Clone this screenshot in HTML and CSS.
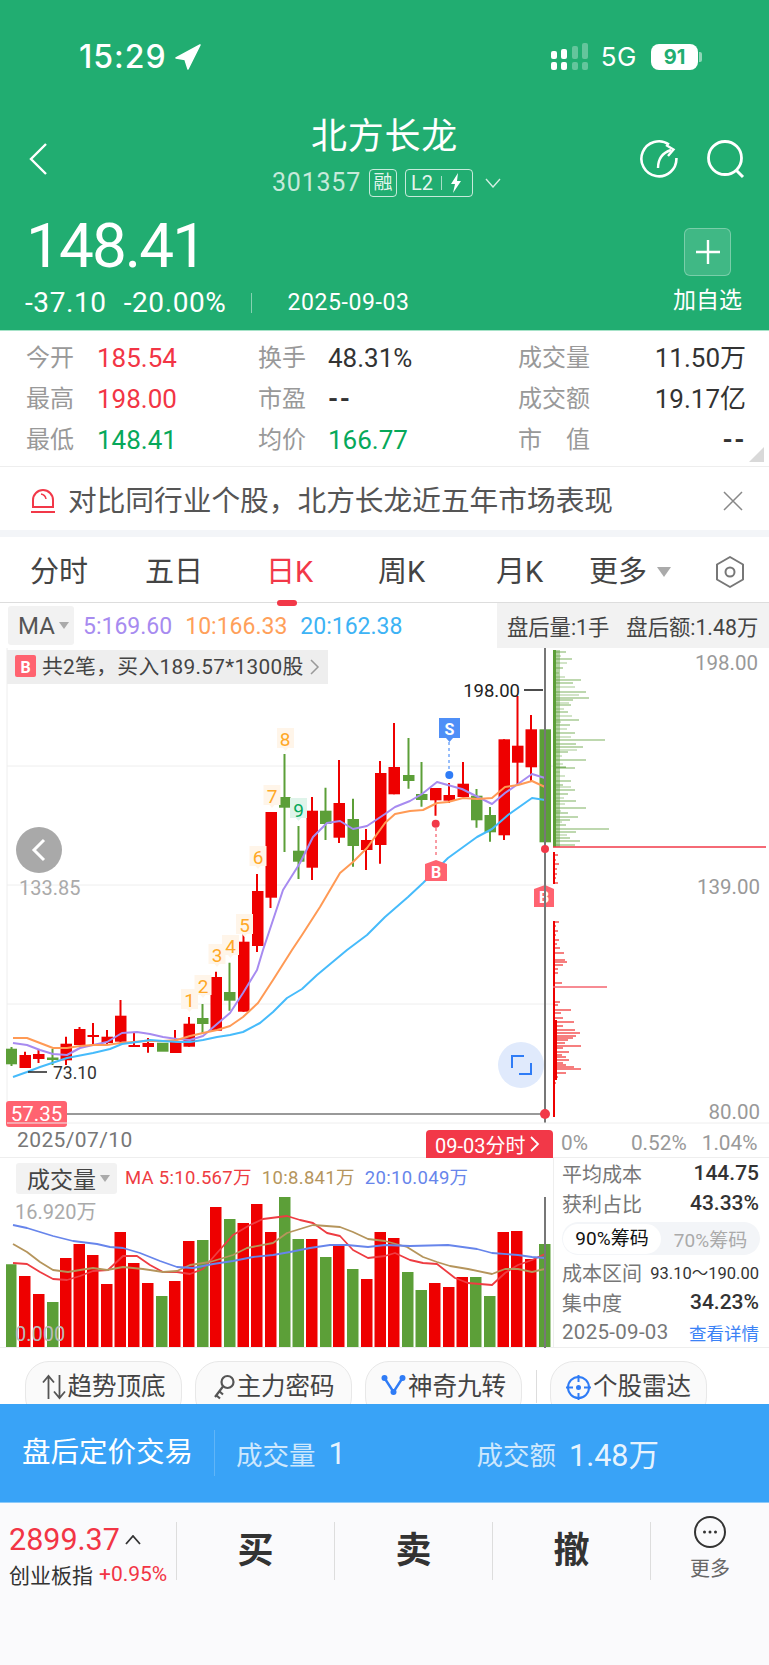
FILE: index.html
```html
<!DOCTYPE html>
<html lang="zh">
<head>
<meta charset="utf-8">
<title>北方长龙</title>
<link rel="stylesheet" href="styles.css">
</head>
<body>
<div class="page">
  <header class="header">
    <div class="status">
      <div class="status-left">
        <span class="time">15:29</span>
        <svg class="nav-arrow" width="26" height="26" viewBox="0 0 26 26"><path d="M25 1 L1 14 L10 15.500 L13 25 Z" fill="#fff" stroke="#fff" stroke-width="1.5" stroke-linejoin="round"/></svg>
      </div>
      <div class="status-right">
        <svg width="38" height="28" viewBox="0 0 38 28"><g fill="#fff"><rect x="0" y="8" width="6" height="8" rx="2"/><rect x="0" y="19" width="6" height="8" rx="2"/><rect x="10" y="6" width="6" height="10" rx="2"/><rect x="10" y="19" width="6" height="8" rx="2"/></g><g fill="#fff" fill-opacity=".3"><rect x="21" y="3" width="6" height="13" rx="2"/><rect x="21" y="19" width="6" height="8" rx="2"/><rect x="31" y="0" width="6" height="16" rx="2"/><rect x="31" y="19" width="6" height="8" rx="2"/></g></svg>
        <span class="net">5G</span>
        <span class="battery"><span class="battery-fill">91</span><span class="battery-tip"></span></span>
      </div>
    </div>
    <div class="title-row">
      <svg class="back" width="20" height="32" viewBox="0 0 20 32"><path d="M18 1 L3 16 L18 31" fill="none" stroke="#fff" stroke-width="2.4"/></svg>
      <div class="title-center">
        <div class="stock-name">北方长龙</div>
        <div class="stock-sub">
          <span class="stock-code">301357</span>
          <span class="badge-rong">融</span>
          <span class="badge-l2">L2<i class="l2-sep"></i><svg width="12" height="20" viewBox="0 0 12 20"><path d="M8 0 L1 11 H5 L3 20 L11 8 H7 Z" fill="#fff"/></svg></span>
          <svg class="sub-chev" width="16" height="10" viewBox="0 0 16 10"><path d="M1 1 L8 9 L15 1" fill="none" stroke="#fff" stroke-opacity=".8" stroke-width="1.4"/></svg>
        </div>
      </div>
      <div class="title-icons">
        <svg width="40" height="40" viewBox="0 0 40 40"><path d="M30 5.5 A17.5 17.5 0 1 0 37.4 19" fill="none" stroke="#fff" stroke-width="2.6"/><path d="M19 29 C19 20 23 14 32 11" fill="none" stroke="#fff" stroke-width="2.4"/><path d="M27 6 L34.500 10.500 L29 17" fill="none" stroke="#fff" stroke-width="2.4"/></svg>
        <svg width="40" height="40" viewBox="0 0 40 40"><circle cx="19" cy="19" r="16.500" fill="none" stroke="#fff" stroke-width="2.8"/><path d="M30 31 L37 38" stroke="#fff" stroke-width="3"/></svg>
      </div>
    </div>
    <div class="price-row">
      <div class="price-left">
        <div class="price">148.41</div>
        <div class="change-row">
          <span class="chg">-37.10</span>
          <span class="chg chg-pct">-20.00%</span>
          <i class="chg-sep"></i>
          <span class="chg-date">2025-09-03</span>
        </div>
      </div>
      <div class="fav">
        <span class="fav-btn">
          <svg width="26" height="26" viewBox="0 0 26 26"><path d="M13 1 V25 M1 13 H25" stroke="#fff" stroke-width="2.400"/></svg>
        </span>
        <span class="fav-text">加自选</span>
      </div>
    </div>
  </header>

  <section class="stats">
    <span class="k">今开</span><span class="v red">185.54</span><span class="k">换手</span><span class="v">48.31%</span><span class="k">成交量</span><span class="v right">11.50万</span>
    <span class="k">最高</span><span class="v red">198.00</span><span class="k">市盈</span><span class="v dash">--</span><span class="k">成交额</span><span class="v right">19.17亿</span>
    <span class="k">最低</span><span class="v green">148.41</span><span class="k">均价</span><span class="v green">166.77</span><span class="k">市　值</span><span class="v right dash">--</span>
    <i class="corner"></i>
  </section>

  <section class="notice">
    <svg width="26" height="26" viewBox="0 0 26 26"><path d="M3 19 V12 A10 10 0 0 1 23 12 V19 Z" fill="none" stroke="#F23848" stroke-width="2"/><path d="M1 24 H25" stroke="#F23848" stroke-width="2"/><path d="M11 6 A6 6 0 0 1 16 11" fill="none" stroke="#F23848" stroke-width="1.500"/></svg>
    <span class="notice-text">对比同行业个股，北方长龙近五年市场表现</span>
    <svg class="notice-x" width="20" height="20" viewBox="0 0 20 20"><path d="M1 1 L19 19 M19 1 L1 19" stroke="#888" stroke-width="1.500"/></svg>
  </section>

  <nav class="tabs">
    <span class="tab">分时</span>
    <span class="tab">五日</span>
    <span class="tab active">日K</span>
    <span class="tab">周K</span>
    <span class="tab">月K</span>
    <span class="tab tab-more">更多<i class="tri tri-lg"></i></span>
    <svg width="32" height="34" viewBox="0 0 32 34"><path d="M16 2 L29 9.500 V24.500 L16 32 L3 24.500 V9.500 Z" fill="none" stroke="#777" stroke-width="2" stroke-linejoin="round"/><circle cx="16" cy="17" r="4.500" fill="none" stroke="#777" stroke-width="2"/></svg>
  </nav>

  <div class="ma-row">
    <span class="ma-box">MA<i class="tri"></i></span>
    <span class="ma-val c-purple">5:169.60</span>
    <span class="ma-val c-orange">10:166.33</span>
    <span class="ma-val c-blue">20:162.38</span>
    <span class="after-box"><span>盘后量:1手</span><span>盘后额:1.48万</span></span>
  </div>

  <svg class="chart" viewBox="0 648 769 510" width="769" height="510">
    <g class="grid-lines">
      <path d="M7 648 V1123 M7 766 H553 M7 885 H553 M7 1004 H553"/>
    </g>
    <rect x="7" y="650" width="321" height="34" fill="#eee"/>
    <rect x="15" y="655" width="21" height="22" rx="2" fill="#FF6370"/>
    <text class="t-b" x="25.500" y="673" text-anchor="middle">B</text>
    <text class="t-tag" x="42" y="674">共2笔，买入189.57*1300股</text>
    <path d="M311 660 L318 667 L311 674" fill="none" stroke="#999" stroke-width="1.500"/>

    <path class="g-wick" d="M11.500 1047V1066M52.500 1049V1065M202.500 1004V1033M229.500 962.700V1010.700M284.500 754V852M298.500 826V879M325.500 787.700V840M353 798.700V866.700M408.500 738V788.700M421.500 762V806.700M476.500 789V827.700M490 807V841.700M545 692.700V842"/>
    <path class="r-wick" d="M25 1051.700V1068M38.500 1049V1063M66 1036.700V1065M79.500 1027V1045M93 1023V1045M107 1030V1045M120.500 1000V1045M134 1033V1047M148 1038V1052.700M175 1030V1053M189 1017V1046.700M216 971.700V1030.700M243.500 930V1011.700M257 874V952M270.500 812V908M312 797V880M339 760V843M366 829V870M380 761V863.700M394 723V794.300M435.500 788V815.700M449 783V803M463 762V797M504 739.300V840M517.500 696V785M531 715V781.700"/>
    <g fill="#5C9F38">
      <rect x="6" y="1048.700" width="11" height="15.600"/><rect x="47" y="1057.500" width="11.500" height="2.500"/><rect x="157" y="1042.700" width="11.500" height="9"/><rect x="197" y="1018" width="11.500" height="6"/><rect x="224" y="992" width="11.500" height="8.700"/><rect x="279" y="797" width="11.500" height="10.700"/><rect x="293" y="850.700" width="11.500" height="11"/><rect x="320" y="810.700" width="11.500" height="13.300"/><rect x="347.500" y="819" width="11.500" height="27"/><rect x="403" y="775" width="11.500" height="6"/><rect x="416" y="794" width="11.500" height="6"/><rect x="471" y="795.700" width="11.500" height="24.600"/><rect x="484.500" y="815" width="11.500" height="17.300"/><rect x="539.500" y="729.300" width="11.500" height="113"/>
    </g>
    <g fill="#EE0000">
      <rect x="19.500" y="1055" width="11.500" height="13"/><rect x="33" y="1054" width="11.500" height="5"/><rect x="60.500" y="1043.700" width="11.500" height="16.600"/><rect x="74" y="1029" width="11.500" height="16"/><rect x="87.500" y="1035" width="11.500" height="2"/><rect x="101.500" y="1036.700" width="11.500" height="6.300"/><rect x="115" y="1015.700" width="11.500" height="26"/><rect x="128.500" y="1045" width="11.500" height="2"/><rect x="142.500" y="1043" width="11.500" height="4"/><rect x="170" y="1041.700" width="11.500" height="11.300"/><rect x="183.500" y="1023.700" width="11.500" height="23"/><rect x="210.500" y="977" width="11.500" height="53.700"/><rect x="238" y="941.700" width="11.500" height="70"/><rect x="252" y="891" width="11.500" height="55"/><rect x="265.500" y="812" width="11.500" height="85.700"/><rect x="306.500" y="810.700" width="11.500" height="57"/><rect x="333.500" y="803" width="11.500" height="34.700"/><rect x="361" y="840" width="11.500" height="10"/><rect x="375" y="773" width="11.500" height="72"/><rect x="388.500" y="767" width="11.500" height="27.300"/><rect x="430" y="788" width="11.500" height="12.300"/><rect x="443.500" y="795" width="11.500" height="5.700"/><rect x="457.500" y="783.700" width="11.500" height="13.300"/><rect x="498.500" y="739.300" width="11.500" height="96"/><rect x="512" y="745.700" width="11.500" height="17"/><rect x="525.500" y="729.300" width="11.500" height="38"/>
    </g>

    <polyline class="ln" stroke="#A78BF0" points="13,1043 27,1045 40,1050 53,1054 67,1055 80,1048 93,1045 107,1042 122,1033 137,1032 150,1034 163,1037 177,1039 190,1040 203,1036 217,1024 230,1013 243,993 257,970 263,950 283,890 300,863 313,837 327,823 340,821 353,829 367,826 385,814 395,807 410,801 422,794 437,782 462,789 492,804 505,793 518,784 532,774 545,778"/>
    <polyline class="ln" stroke="#FF9A55" points="13,1038 27,1038 40,1043 53,1048 67,1048 80,1046 93,1045 107,1045 120,1043 133,1042 147,1041 163,1041 177,1040 190,1036 203,1033 217,1030 230,1026 243,1017 258,1003 273,980 292,950 302,935 320,907 340,873 353,862 367,848 385,823 395,814 410,811 423,810 437,803 448,802 463,798 477,799 492,798 505,787 518,785 532,781 545,787"/>
    <polyline class="ln" stroke="#46BBFB" points="13,1077 27,1072 40,1067 67,1058 93,1053 110,1049 122,1044 137,1042 150,1040 163,1041 177,1042 190,1042 203,1040 217,1037 230,1035 243,1032 260,1023 273,1012 287,998 302,989 317,975 347,950 367,935 385,917 408,897 423,883 448,858 477,837 492,829 508,815 532,798 545,800"/>

    <g class="tag-o"><path d="M277 728h17v20h-6l-2.500 3l-2.500-3h-6z"/><path d="M263.500 785h17v20h-6l-2.500 3l-2.500-3h-6z"/><path d="M249.500 846h17v20h-6l-2.500 3l-2.500-3h-6z"/><path d="M236 914h17v20h-6l-2.500 3l-2.500-3h-6z"/><path d="M222 935h17v20h-6l-2.500 3l-2.500-3h-6z"/><path d="M208.500 944h17v20h-6l-2.500 3l-2.500-3h-6z"/><path d="M194.500 975h17v20h-6l-2.500 3l-2.500-3h-6z"/><path d="M181 989h17v20h-6l-2.500 3l-2.500-3h-6z"/></g>
    <path d="M290 798h17v20h-6l-2.500 3l-2.500-3h-6z" fill="#DFF4EA"/>
    <g class="t-num">
      <text x="285" y="746">8</text><text x="272" y="803">7</text><text x="258" y="864">6</text><text x="244.500" y="932">5</text><text x="230.500" y="953">4</text><text x="217" y="962">3</text><text x="203" y="993">2</text><text x="189.500" y="1007">1</text>
    </g>
    <text class="t-num9" x="298.500" y="817">9</text>

    <path class="dash-b" d="M449 742V770"/>
    <path d="M439 718h21v20h-7l-3.500 4l-3.500-4h-7z" fill="#4F8FF7"/>
    <text class="t-b" x="449.500" y="735" text-anchor="middle">S</text>
    <circle cx="449.300" cy="775" r="4" fill="#2F7CF6"/>

    <path class="dash-r" d="M436 828V858"/>
    <circle cx="435.700" cy="823.700" r="4" fill="#F23848"/>
    <path d="M425 864l11-4l11 4v17h-22z" fill="#FF6370"/>
    <text class="t-b" x="436" y="878" text-anchor="middle">B</text>

    <path class="dash-r" d="M545 854V886"/>
    <path d="M534 889l11-4l9 4v18h-20z" fill="#FF6370"/>
    <text class="t-b" x="544" y="903" text-anchor="middle">B</text>

    <path d="M524 690H543" stroke="#111" stroke-width="1.500"/>
    <text class="t-black" x="520" y="697" text-anchor="end">198.00</text>
    <path d="M28 1072H47" stroke="#222" stroke-width="1.500"/>
    <text class="t-black2" x="53" y="1079">73.10</text>
    <text class="t-gray" x="19" y="895">133.85</text>
    <text class="t-gray2" x="758" y="670" text-anchor="end">198.00</text>
    <text class="t-gray2" x="760" y="894" text-anchor="end">139.00</text>
    <text class="t-gray2" x="760" y="1119" text-anchor="end">80.00</text>

    <path d="M7 1114H545" stroke="#777" stroke-width="1.500"/>
    <path d="M545 648V1123" stroke="#777" stroke-width="2"/>
    <rect x="6" y="1101" width="61" height="26" rx="3" fill="#FF6370"/>
    <text class="t-white" x="36.500" y="1121" text-anchor="middle">57.35</text>
    <circle cx="545" cy="849" r="4" fill="#F23848"/>
    <circle cx="545" cy="1114" r="5" fill="#F23848"/>

    <circle cx="39" cy="850" r="23" fill="#A9A9A9"/>
    <path d="M44 840 L34 850 L44 860" fill="none" stroke="#fff" stroke-width="3"/>
    <circle cx="521" cy="1065" r="23" fill="#E0EAFC"/>
    <path d="M512 1068V1056H524 M531 1063V1074H519" fill="none" stroke="#2F7CF6" stroke-width="2"/>

    <rect x="553" y="650" width="3" height="197" fill="#5C9F38"/>
    <rect x="556" y="650" width="4" height="197" fill="#5C9F38" fill-opacity=".45"/>
    <path class="prof-g" d="M553 652h13M553 659h19M553 668h10M553 680h28M553 683h20M553 692h33M553 698h36M553 700h20M553 705h18M553 712h15M553 720h26M553 725h17M553 733h22M553 740h52M553 744h23M553 747h30M553 752h15M553 760h33M553 767h13M553 768h22M553 781h18M553 785h10M553 790h22M553 794h15M553 801h23M553 808h33M553 813h15M553 817h25M553 820h17M553 825h13M553 829h56M553 832h23M553 838h17M553 841h27M553 845h22"/>
    <path class="prof-g2" d="M553 656h8M553 663h14M553 673h6M553 677h12M553 687h22M553 695h26M553 703h16M553 709h11M553 716h19M553 722h8M553 729h14M553 737h18M553 750h24M553 756h9M553 764h10M553 772h7M553 776h12M553 787h18M553 798h11M553 804h12M553 811h8M553 822h9M553 835h14"/>
    <path d="M553 847H766" stroke="#F23848" stroke-width="1.500"/>
    <rect x="553" y="852" width="2" height="32" fill="#EE0000"/>
    <rect x="553" y="921" width="2" height="196" fill="#EE0000"/>
    <rect x="555" y="1020" width="2" height="60" fill="#EE0000"/>
    <path class="prof-r" d="M553 855h5M553 860h3M553 864h6M553 869h4M553 874h4M553 878h3M553 883h5M553 922h6M553 926h3M553 931h5M553 935h3M553 940h6M553 944h4M553 948h7M553 953h11M553 960h12M553 962h14M553 965h10M553 969h5M553 973h5M553 983h9M553 1002h7M553 1005h5M553 1010h18M553 1013h8M553 1018h10M553 1022h21M553 1026h10M553 1030h22M553 1033h27M553 1036h23M553 1038h20M553 1040h15M553 1043h12M553 1046h28M553 1048h10M553 1052h16M553 1055h9M553 1057h13M553 1060h16M553 1063h10M553 1065h13M553 1067h21M553 1069h28M553 1073h13M553 1077h5M553 1083h3"/>
    <path d="M553 987h54" stroke="#F4646F" stroke-width="1.500"/>
    <path d="M7 1123H769" stroke="#eee" stroke-width="1"/>
  </svg>

  <div class="date-row">
    <span class="date-left">2025/07/10</span>
    <span class="date-badge">09-03分时<svg width="10" height="16" viewBox="0 0 10 16"><path d="M1 1 L8 8 L1 15" fill="none" stroke="#fff" stroke-width="1.800"/></svg></span>
    <span class="pct-scale"><span>0%</span><span class="pct-mid">0.52%</span><span class="pct-last">1.04%</span></span>
  </div>

  <section class="lower">
    <div class="vol">
      <div class="vol-head">
        <span class="vol-box">成交量<i class="tri"></i></span>
        <span class="vma c-red">MA 5:10.567万</span>
        <span class="vma c-brown">10:8.841万</span>
        <span class="vma c-vblue">20:10.049万</span>
      </div>
      <svg class="vol-chart" viewBox="0 1197 553 151" width="553" height="151">
        <path class="vbar-g" d="M6 1264.300h10.500V1347H6zM47 1302h11.500V1347H47zM156 1296h11.500V1347H156zM197 1240h11.500V1347H197zM224 1219h11.500V1347H224zM279 1197h11.500V1347H279zM292.500 1239h11.500V1347H292.500zM320 1257h11.500V1347H320zM347 1269h11.500V1347H347zM402 1272h11.500V1347H402zM415.500 1290h11.500V1347H415.500zM470 1277h11.500V1347H470zM484 1296h11.500V1347H484zM539 1244h11.500V1347H539z"/>
        <path class="vbar-r" d="M19 1276h11.500V1347H19zM33 1294h11.500V1347H33zM60 1258h11.500V1347H60zM73.500 1244h11.500V1347H73.500zM87 1255h11.500V1347H87zM101 1284h11.500V1347H101zM114.500 1232h11.500V1347H114.500zM128 1263h11.500V1347H128zM142 1283h11.500V1347H142zM169 1281h11.500V1347H169zM183 1241h11.500V1347H183zM210 1207h11.500V1347H210zM237.500 1223h11.500V1347H237.500zM251 1204h11.500V1347H251zM265 1232h11.500V1347H265zM306 1239h11.500V1347H306zM333 1245h11.500V1347H333zM361 1279h11.500V1347H361zM374.500 1232h11.500V1347H374.500zM388 1238h11.500V1347H388zM429 1283h11.500V1347H429zM443 1287h11.500V1347H443zM456.500 1277h11.500V1347H456.500zM497.500 1232h11.500V1347H497.500zM511 1231h11.500V1347H511zM525 1259h11.500V1347H525z"/>
        <polyline class="vln" stroke="#EE3C42" points="13,1263 27,1264 40,1272 53,1279 67,1280 80,1276 93,1271 108,1270 123,1256 137,1256 150,1265 163,1272 177,1272 190,1274 203,1269 217,1253 233,1235 250,1225 263,1219 287,1216 300,1220 313,1223 327,1233 340,1236 353,1250 368,1258 385,1256 395,1253 410,1260 423,1263 437,1264 455,1278 468,1283 492,1285 505,1273 518,1265 532,1260 545,1254"/>
        <polyline class="vln" stroke="#B5955C" points="13,1244 27,1252 40,1262 53,1270 68,1272 80,1270 93,1268 107,1270 123,1267 143,1269 163,1272 177,1271 190,1265 210,1262 233,1255 247,1248 273,1243 287,1233 300,1229 313,1225 340,1227 353,1232 368,1239 385,1241 407,1247 423,1257 437,1262 450,1266 468,1269 492,1274 505,1269 518,1269 532,1272 545,1269"/>
        <polyline class="vln" stroke="#6785EB" points="13,1225 27,1228 40,1232 53,1236 73,1241 97,1244 110,1247 123,1248 140,1253 160,1261 177,1267 193,1268 213,1264 233,1261 253,1257 273,1255 290,1252 310,1248 330,1245 347,1245 368,1247 385,1245 410,1246 448,1245 477,1249 492,1253 518,1255 532,1257 545,1258"/>
        <text class="t-volmax" x="15" y="1219">16.920万</text>
        <text class="t-volmin" x="15" y="1341">0.000</text>
        <path d="M545 1197V1348" stroke="#777" stroke-width="2"/>
      </svg>
    </div>
    <aside class="cost">
      <div class="cost-row"><span class="ck">平均成本</span><span class="cv">144.75</span></div>
      <div class="cost-row"><span class="ck">获利占比</span><span class="cv">43.33%</span></div>
      <div class="toggle"><span class="toggle-on">90%筹码</span><span class="toggle-off">70%筹码</span></div>
      <div class="cost-row"><span class="ck">成本区间</span><span class="cv-sm">93.10～190.00</span></div>
      <div class="cost-row"><span class="ck">集中度</span><span class="cv">34.23%</span></div>
      <div class="cost-row"><span class="cdate">2025-09-03</span><span class="clink">查看详情</span></div>
    </aside>
  </section>

  <div class="chips">
    <span class="chip"><svg width="24" height="26" viewBox="0 0 24 26"><path d="M6.500 25V3 M1 8.500 L6.500 2 L12 8.500 M17.500 1V23 M12 17.500 L17.500 24 L23 17.500" fill="none" stroke="#555" stroke-width="1.800"/></svg>趋势顶底</span>
    <span class="chip"><svg width="22" height="26" viewBox="0 0 22 26"><circle cx="14.500" cy="8" r="6" fill="none" stroke="#555" stroke-width="2.200"/><path d="M10 12.500 L2 23 M3 21 L7 24.500 M6 17 L10 20.500" fill="none" stroke="#555" stroke-width="2.200"/></svg>主力密码</span>
    <span class="chip"><svg width="25" height="22" viewBox="0 0 25 22"><path d="M3.500 4 L12.500 18 L21.500 4" fill="none" stroke="#2F7CF6" stroke-width="2.400"/><circle cx="3.500" cy="4" r="3" fill="#2F7CF6"/><circle cx="21.500" cy="4" r="3" fill="#2F7CF6"/><circle cx="12.500" cy="18" r="3" fill="#2F7CF6"/></svg>神奇九转</span>
    <i class="chip-sep"></i>
    <span class="chip"><svg width="25" height="27" viewBox="0 0 25 27"><circle cx="12.500" cy="13.500" r="10.500" fill="none" stroke="#2F7CF6" stroke-width="2"/><circle cx="12.500" cy="13.500" r="2.500" fill="#2F7CF6"/><path d="M12.500 1V8 M12.500 19V26 M0 13.500H7 M18 13.500H25" stroke="#2F7CF6" stroke-width="2"/></svg>个股雷达</span>
  </div>

  <section class="after-bar">
    <span class="after-title">盘后定价交易</span>
    <i class="after-sep"></i>
    <span class="after-k">成交量</span><span class="after-v after-v1">1</span>
    <span class="after-k">成交额</span><span class="after-v">1.48万</span>
  </section>

  <footer class="footer">
    <div class="index">
      <div class="idx-top"><span class="idx-val">2899.37</span><svg width="16" height="10" viewBox="0 0 16 10"><path d="M1 9 L8 1 L15 9" fill="none" stroke="#333" stroke-width="1.800"/></svg></div>
      <div class="idx-bot"><span class="idx-name">创业板指</span><span class="idx-pct">+0.95%</span></div>
    </div>
    <span class="act">买</span>
    <span class="act">卖</span>
    <span class="act">撤</span>
    <div class="act act-more">
      <svg width="32" height="32" viewBox="0 0 32 32"><circle cx="16" cy="16" r="15" fill="none" stroke="#333" stroke-width="2"/><circle cx="10.500" cy="16" r="1.500" fill="#333"/><circle cx="16" cy="16" r="1.500" fill="#333"/><circle cx="21.500" cy="16" r="1.500" fill="#333"/></svg>
      <span class="more-text">更多</span>
    </div>
  </footer>
</div>
</body>
</html>
```

FILE: styles.css
```css
* { box-sizing: border-box; }
html, body { margin: 0; padding: 0; background: #fff; }
body { font-family: Roboto, "Noto Sans CJK SC", sans-serif; color: #333; }
i { display: block; font-style: normal; }
svg { display: block; flex: none; }
.page { width: 769px; height: 1665px; overflow: hidden; display: flex; flex-direction: column; }

.header { height: 331px; background: #21AD71; color: #fff; border-bottom: 1px solid #A6E3C8; flex: none; }
.status { height: 112px; display: flex; justify-content: space-between; align-items: flex-start; padding: 43px 67px 0 79px; }
.status-left { display: flex; align-items: center; gap: 8px; height: 28px; }
.time { font-family: Inter, sans-serif; font-size: 32px; font-weight: 500; line-height: 28px; letter-spacing: 1px; }
.status-right { display: flex; align-items: center; height: 28px; gap: 12px; }
.net { font-family: Inter, sans-serif; font-size: 26px; font-weight: 400; line-height: 28px; letter-spacing: .5px; }
.battery { display: flex; align-items: center; gap: 1px; margin-left: 2px; }
.battery-fill { width: 47px; height: 26px; border-radius: 8px; background: #fff; color: #21AD71; font-family: Inter, sans-serif; font-size: 20px; font-weight: 700; line-height: 26px; text-align: center; }
.battery-tip { width: 3px; height: 10px; border-radius: 0 2px 2px 0; background: rgba(255, 255, 255, .5); }

.title-row { height: 84px; display: flex; align-items: center; position: relative; padding: 0 23px 0 28px; justify-content: space-between; }
.back { margin-top: 10px; }
.title-center { position: absolute; left: 4px; right: 0; top: 3px; display: flex; flex-direction: column; align-items: center; }
.stock-name { font-size: 36px; line-height: 44px; font-weight: 400; letter-spacing: .7px; margin-left: -4px; }
.stock-sub { display: flex; align-items: center; gap: 8px; height: 32px; margin-top: 8px; }
.stock-code { font-size: 25px; color: rgba(255, 255, 255, .75); letter-spacing: .8px; line-height: 32px; }
.badge-rong { width: 28px; height: 28px; border: 1px solid rgba(255, 255, 255, .75); border-radius: 4px; font-size: 19px; line-height: 25px; text-align: center; color: rgba(255, 255, 255, .9); }
.badge-l2 { display: flex; align-items: center; width: 68px; height: 28px; padding-left: 5px; gap: 8px; border: 1px solid rgba(255, 255, 255, .75); border-radius: 4px; font-size: 20px; line-height: 26px; color: rgba(255, 255, 255, .9); }
.l2-sep { width: 1px; height: 14px; background: rgba(255, 255, 255, .6); }
.sub-chev { margin-left: 4px; }
.title-icons { display: flex; gap: 27px; margin-top: 9px; }

.price-row { height: 134px; display: flex; justify-content: space-between; padding: 19px 27px 0 25px; }
.price { font-size: 62px; line-height: 62px; font-weight: 400; letter-spacing: -1.900px; padding-left: 1px; }
.change-row { display: flex; align-items: center; height: 28px; margin-top: 12px; }
.chg { font-size: 28px; line-height: 28px; letter-spacing: .6px; }
.chg-pct { margin-left: 17px; }
.chg-sep { width: 1px; height: 20px; background: rgba(255, 255, 255, .45); margin-left: 25px; }
.chg-date { font-size: 23px; line-height: 28px; margin-left: 35px; letter-spacing: .6px; }
.fav { display: flex; flex-direction: column; align-items: center; gap: 13px; padding-top: 13px; }
.fav-btn { width: 47px; height: 48px; border: 1px solid rgba(255, 255, 255, .3); border-radius: 6px; background: rgba(255, 255, 255, .14); display: flex; align-items: center; justify-content: center; }
.fav-text { font-size: 23px; line-height: 24px; }

.stats { height: 136px; flex: none; display: grid; grid-template-columns: 71px 161px 70px 190px 100px 128px; grid-auto-rows: 41px; padding: 7px 0 0 26px; align-items: center; position: relative; border-bottom: 1px solid #eee; }
.k { font-size: 24px; color: #999; line-height: 41px; white-space: nowrap; }
.v { font-size: 26px; line-height: 41px; color: #333; white-space: nowrap; }
.v.right { text-align: right; }
.v.dash { font-weight: 700; letter-spacing: 1.500px; }
.red { color: #F23545; }
.green { color: #06A85A; }
.corner { position: absolute; right: 5px; bottom: 4px; width: 0; height: 0; border-style: solid; border-width: 0 0 15px 15px; border-color: transparent transparent #D9D9D9 transparent; }

.notice { height: 63px; flex: none; display: flex; align-items: center; padding: 4px 26px 0 30px; }
.notice-text { font-size: 28.700px; line-height: 40px; color: #555; margin-left: 12px; white-space: nowrap; flex: 1; }
.tabs { height: 73px; flex: none; display: grid; grid-template-columns: 115px 121px 112px 118px 93px 125px 32px; align-items: center; padding: 5px 0 0 30px; border-top: 7px solid #F3F5F8; border-bottom: 1px solid #DDD; }
.tab { font-size: 29px; line-height: 40px; color: #444; position: relative; display: flex; align-items: center; }
.tab.active { color: #F23848; }
.tab.active::after { content: ""; position: absolute; left: 11px; bottom: -14px; width: 20px; height: 6px; border-radius: 3px; background: #F23848; }
.tri { width: 0; height: 0; border-style: solid; border-width: 7px 5px 0 5px; border-color: #aaa transparent transparent transparent; margin-left: 4px; }
.tri-lg { border-width: 10px 7px 0 7px; margin-left: 10px; }

.ma-row { height: 45px; flex: none; display: flex; align-items: center; padding-left: 8px; position: relative; }
.ma-box { width: 66px; height: 39px; background: #F2F2F2; border-radius: 3px; display: flex; align-items: center; padding-left: 10px; font-size: 24px; color: #555; }
.ma-val { font-size: 23px; line-height: 30px; white-space: nowrap; margin-left: 13px; padding-top: 2px; }
.ma-box + .ma-val { margin-left: 9px; }
.c-purple { color: #A78BF0; }
.c-orange { color: #FFA05A; }
.c-blue { color: #3DB3F5; }
.c-red { color: #EE3C42; }
.c-brown { color: #B5955C; }
.c-vblue { color: #6785EB; }
.after-box { margin-left: auto; width: 272px; height: 45px; background: #F2F2F2; display: flex; align-items: center; padding-left: 10px; gap: 17px; font-size: 21.300px; color: #444; white-space: nowrap; }

.chart { flex: none; }
.grid-lines path { stroke: #EEE; stroke-width: 1; fill: none; }
.t-b { font: 700 16px Roboto, sans-serif; fill: #fff; }
.t-tag { font: 400 20.800px Roboto, "Noto Sans CJK SC", sans-serif; letter-spacing: .3px; fill: #444; }
.g-wick { stroke: #5C9F38; stroke-width: 2; fill: none; }
.r-wick { stroke: #EE0000; stroke-width: 2; fill: none; }
.ln { fill: none; stroke-width: 2; stroke-linejoin: round; }
.tag-o path { fill: #FFF5E9; }
.t-num text { font: 400 19px Roboto, sans-serif; fill: #FFA826; text-anchor: middle; }
.t-num9 { font: 400 19px Roboto, sans-serif; fill: #06A85A; text-anchor: middle; }
.dash-b { stroke: #2F7CF6; stroke-width: 1; stroke-dasharray: 3 3; fill: none; }
.dash-r { stroke: #F23848; stroke-width: 1; stroke-dasharray: 3 3; fill: none; }
.t-black { font: 400 18.500px Roboto, sans-serif; fill: #222; }
.t-black2 { font: 400 17.500px Roboto, sans-serif; fill: #333; }
.t-gray { font: 400 20px Roboto, sans-serif; fill: #AAA; }
.t-gray2 { font: 400 20.500px Roboto, sans-serif; fill: #999; }
.t-white { font: 400 20.500px Roboto, sans-serif; fill: #fff; }
.prof-g { stroke: #5C9F38; stroke-width: 1.200; fill: none; opacity: .8; }
.prof-g2 { stroke: #5C9F38; stroke-width: 1; fill: none; opacity: .55; }
.prof-r { stroke: #EE0000; stroke-width: 1.100; fill: none; }

.date-row { height: 35px; flex: none; margin-top: -35px; display: flex; align-items: center; padding-left: 17px; position: relative; border-bottom: 1px solid #EEE; }
.date-left { font-size: 21px; color: #777; letter-spacing: .4px; line-height: 26px; }
.date-badge { position: absolute; left: 426px; top: 7px; width: 127px; height: 28px; background: #F23848; border-radius: 4px 4px 0 0; color: #fff; font-size: 20px; display: flex; align-items: center; padding-left: 9px; gap: 4px; white-space: nowrap; }
.pct-scale { position: absolute; left: 561px; top: 7px; display: flex; font-size: 20.800px; color: #999; line-height: 26px; white-space: nowrap; }
.pct-mid { margin-left: 43px; }
.pct-last { margin-left: 15px; }

.lower { display: flex; flex: none; height: 190px; border-bottom: 1px solid #EEE; }
.vol { width: 553px; flex: none; }
.vol-head { height: 39px; display: flex; align-items: center; padding: 1px 0 0 16px; }
.vol-box { width: 101px; height: 31px; background: #F2F2F2; border-radius: 3px; display: flex; align-items: center; padding-left: 11px; font-size: 23px; color: #444; white-space: nowrap; }
.vma { font-size: 18.500px; line-height: 24px; white-space: nowrap; margin-left: 10px; letter-spacing: .3px; }
.vol-box + .vma { margin-left: 8px; }
.vbar-g { fill: #5C9F38; }
.vbar-r { fill: #EE0000; }
.vln { fill: none; stroke-width: 1.800; stroke-linejoin: round; }
.t-volmax { font: 400 20px Roboto, "Noto Sans CJK SC", sans-serif; fill: #AAA; }
.t-volmin { font: 400 20px Roboto, sans-serif; fill: #BBB; }

.cost { width: 216px; flex: none; padding: 0 10px 0 8px; border-left: 1px solid #EEE; }
.cost-row { display: flex; justify-content: space-between; align-items: center; height: 30px; white-space: nowrap; }
.ck { font-size: 20px; color: #777; }
.cv { font-size: 21px; font-weight: 500; color: #333; }
.cv-sm { font-size: 16.500px; color: #333; }
.toggle { display: flex; align-items: center; height: 33px; width: 198px; margin: 4px 0 2px 0; background: #F3F5F8; border-radius: 17px; font-size: 19px; white-space: nowrap; }
.toggle-on { width: 98px; height: 30px; margin-left: 1px; background: #fff; border-radius: 15px; text-align: center; line-height: 30px; color: #111; }
.toggle-off { flex: 1; text-align: center; color: #AAA; }
.cdate { font-size: 20.500px; color: #777; letter-spacing: .3px; }
.clink { font-size: 17.500px; color: #3B82F6; }

.chips { height: 56px; flex: none; display: flex; align-items: flex-start; overflow: hidden; padding: 13px 0 0 25px; gap: 13px; }
.chip { width: 157px; height: 60px; flex: none; background: #FAFAFA; border: 1px solid #E8E8E8; border-radius: 24px; display: flex; align-items: flex-start; justify-content: center; padding-top: 8px; gap: 2px; font-size: 24.500px; line-height: 34px; color: #444; white-space: nowrap; }
.chip svg { margin-top: 4px; }
.chip-sep { width: 1px; height: 33px; background: #DDD; margin: 9px 0 0 1px; }

.after-bar { height: 99px; flex: none; background: #39A3F7; border-bottom: 1px solid #8CCAFA; display: flex; align-items: center; padding-left: 22px; color: #fff; }
.after-title { font-size: 28.500px; line-height: 40px; white-space: nowrap; width: 192px; }
.after-sep { width: 1px; height: 46px; background: rgba(255, 255, 255, .2); margin-right: 21px; }
.after-k { font-size: 26.500px; color: rgba(255, 255, 255, .75); white-space: nowrap; }
.after-v { font-size: 30.500px; color: rgba(255, 255, 255, .9); margin-left: 13px; white-space: nowrap; }
.after-v1 { width: 148px; }

.footer { flex: 1; background: #FAFAFC; display: grid; grid-template-columns: 176px 158px 158px 158px 119px; align-items: start; padding-top: 19px; }
.index { padding-left: 9px; height: 60px; white-space: nowrap; }
.idx-top { display: flex; align-items: center; gap: 5px; height: 36px; }
.idx-val { font-size: 30.500px; line-height: 36px; color: #F23545; }
.idx-bot { display: flex; gap: 6px; align-items: center; margin-top: 1px; height: 30px; }
.idx-name { font-size: 21px; color: #333; }
.idx-pct { font-size: 21px; color: #F23545; }
.act { height: 58px; border-left: 1px solid #DDD; display: flex; align-items: center; justify-content: center; font-size: 36px; font-weight: 700; color: #333; line-height: 58px; }
.act-more { flex-direction: column; justify-content: flex-start; font-weight: 400; overflow: visible; }
.act-more svg { margin-top: -6px; }
.more-text { font-size: 20px; line-height: 28px; color: #666; margin-top: 7px; }
```
